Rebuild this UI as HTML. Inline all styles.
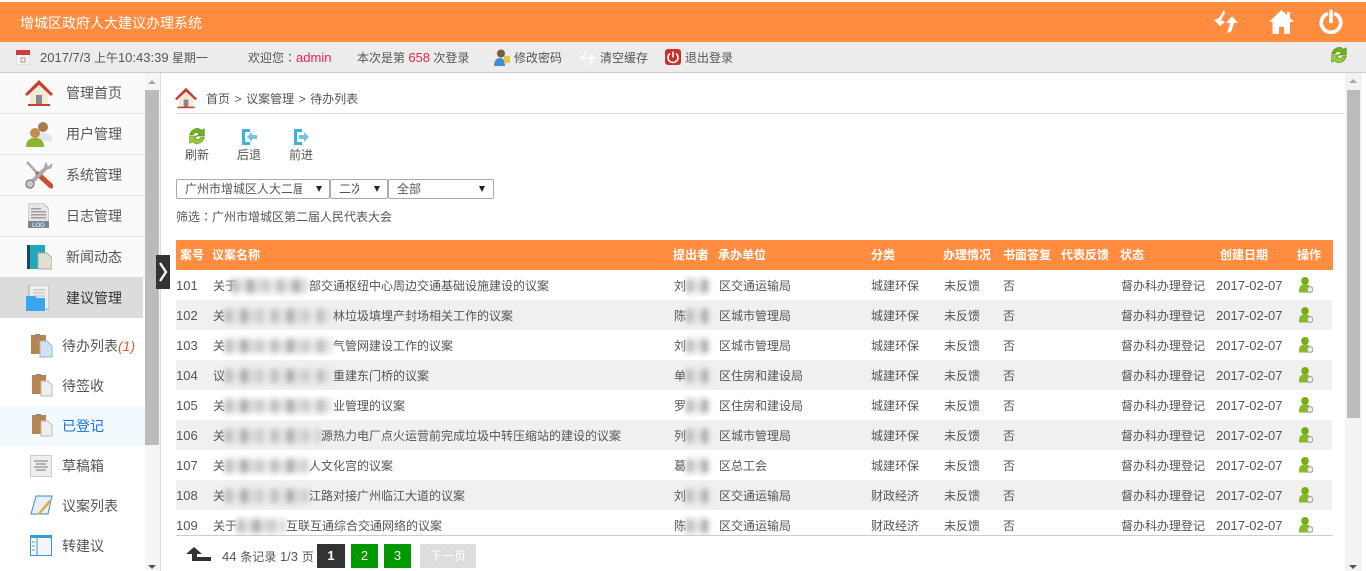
<!DOCTYPE html>
<html lang="zh">
<head>
<meta charset="utf-8">
<title>增城区政府人大建议办理系统</title>
<style>
*{box-sizing:border-box;margin:0;padding:0}
html,body{width:1366px;height:571px;overflow:hidden;background:#fff}
body{position:relative;font-family:"Liberation Sans","Noto Sans CJK SC",sans-serif;font-size:12px;color:#555}
.a{position:absolute;white-space:nowrap}
svg{position:absolute;display:block}
.top{left:0;top:2px;width:1366px;height:40px;background:#ff8c3f}
.bar{left:0;top:42px;width:1366px;height:31px;background:#ececec;border-bottom:1px solid #ccc}
.t{line-height:16px;height:16px}
.n{font-size:13px}
.red{color:#e8254f}
.col{font-family:"Noto Sans CJK TC",sans-serif}
.mi{left:0;width:145px;height:41px;background:#fafafa;border-bottom:1px solid #e2e2e2}
.mt{left:66px;font-size:14px;line-height:20px;color:#555}
.st{left:62px;font-size:14px;line-height:20px;color:#555}
.hd{left:176px;top:240px;width:1157px;height:30px;background:#ff8c3f}
.h{top:247px;line-height:16px;font-weight:bold;color:#fff;font-size:12px}
.clip{left:176px;top:270px;width:1157px;height:266px;overflow:hidden;border-bottom:1px solid #ccc;position:absolute}
.r{position:absolute;left:0;width:1156px;height:30px}
.r.g{background:#f0f0f0}
.r span{position:absolute;top:8px;line-height:16px;white-space:nowrap;color:#555}
.r i{position:absolute;top:9px;height:14px;filter:blur(3px);background:repeating-linear-gradient(90deg,#bbb 0 7px,#e2e2e2 7px 16px,#a4a4a4 16px 22px,#dadada 22px 33px,#c4c4c4 33px 38px,#e8e8e8 38px 46px)}
.c0{left:0;font-size:13px}.c1{left:37px}.c2{left:498px}.c3{left:543px}.c4{left:695px}.c5{left:768px}.c6{left:827px}.c7{left:945px}.c8{left:1040px;font-size:13px}
.r svg{left:1123px;top:7px}
.pb{top:544px;height:24px;line-height:24px;text-align:center;font-size:13px;color:#fff}
.sel{top:179px;height:20px;border:1px solid #aaa;background:#fff;border-radius:2px;line-height:18px;color:#555}
.sel b{position:absolute;left:8px;top:0;overflow:hidden;font-weight:normal;height:18px;white-space:nowrap}
.sel u{position:absolute;top:6px;width:0;height:0;border:3.500px solid transparent;border-bottom:0;border-top:6px solid #222}
</style>
</head>
<body>
<svg width="0" height="0" style="position:absolute">
<defs>
<symbol id="op" viewBox="0 0 14 16">
<ellipse cx="6" cy="4" rx="3.800" ry="4" fill="#76ac14"/>
<path d="M0 14c0-5 2-6.500 6-6.500s6 1.500 6 6.500v1.500H0z" fill="#86ba1e"/>
<circle cx="11" cy="12.500" r="2.900" fill="#eee" stroke="#999"/>
</symbol>
<symbol id="cl" viewBox="0 0 24 24">
<rect x="2" y="1" width="14" height="19" fill="#b9854f"/><rect x="6" y="0" width="5" height="3" fill="#8a8a8a"/>
<path d="M11 7h7l4 4v11H11z" fill="#eee" stroke="#bbb"/>
</symbol>
<symbol id="rf" viewBox="0 0 16 16">
<path d="M1.500 7C3 1.500 9-.5 12 3L14.500 1.500V8H8l2-2C8 4 5 5 4.500 7z" fill="#6fb01c" stroke="#4c7f10" stroke-width=".5"/>
<path d="M14.500 9c-1.500 5.500-7.500 7.500-10.500 4L1.500 14.500V8H8l-2 2c2 2 5 1 5.500-1z" fill="#96d030" stroke="#4c7f10" stroke-width=".5"/>
</symbol>
</defs>
</svg>

<div class="a top"></div>
<div class="a t" style="left:20px;top:14px;font-size:14px;color:#fff;line-height:18px;height:18px">增城区政府人大建议办理系统</div>
<svg style="left:1214px;top:9px" width="24" height="24" viewBox="0 0 24 24"><path d="M10 1 5 9 0 11l6 6 5-4-4-2 4-7zM18 7l6 7h-4l-3 9-4 1 3-10h-4z" fill="#fff"/></svg>
<svg style="left:1269px;top:10px" width="25" height="24" viewBox="0 0 25 24"><path d="M12.500 0 0 12h3.500v12h6.500v-7h5v7h6V12H25l-4-4V2h-3v3z" fill="#fff"/></svg>
<svg style="left:1319px;top:9px" width="24" height="25" viewBox="0 0 26 26"><path d="M8 5a10.500 10.500 0 1 0 10 0" fill="none" stroke="#fff" stroke-width="4" stroke-linecap="round"/><path d="M13 2v11" stroke="#fff" stroke-width="4" stroke-linecap="round"/></svg>

<div class="a bar"></div>
<svg style="left:16px;top:50px" width="14" height="15" viewBox="0 0 14 15"><rect width="14" height="15" fill="#f4f4f4" stroke="#ccc"/><rect width="14" height="5" fill="#d33a3a"/><path d="M5 8h4v4H5z" fill="none" stroke="#999"/></svg>
<div class="a t" style="left:40px;top:50px"><span class="n">2017/7/3</span> 上午<span class="n">10:43:39</span> 星期一</div>
<div class="a t" style="left:248px;top:50px">欢迎您<span class="col" lang="zh-TW">：</span><span class="n red">admin</span></div>
<div class="a t" style="left:357px;top:50px">本次是第 <span class="n red">658</span> 次登录</div>
<svg style="left:493px;top:49px" width="18" height="17" viewBox="0 0 18 17"><circle cx="8" cy="4.500" r="4" fill="#7a5c3e"/><path d="M1 17c0-6 3-8 6-8s5 2 5 8z" fill="#3f8fd8"/><path d="M11 7h6v7h-6z" fill="#e8c34a"/></svg>
<div class="a t" style="left:514px;top:50px">修改密码</div>
<svg style="left:579px;top:49px" width="17" height="17" viewBox="0 0 24 24"><path d="M10 1 5 9 0 11l6 6 5-4-4-2 4-7zM18 7l6 7h-4l-3 9-4 1 3-10h-4z" fill="#fafafa"/></svg>
<div class="a t" style="left:600px;top:50px">清空缓存</div>
<svg style="left:665px;top:49px" width="16" height="16" viewBox="0 0 16 16"><rect width="16" height="16" rx="3" fill="#c9302c"/><path d="M5 4.500a5 5 0 1 0 6 0" fill="none" stroke="#fff" stroke-width="1.600"/><path d="M8 2.500v6" stroke="#fff" stroke-width="1.600"/></svg>
<div class="a t" style="left:685px;top:50px">退出登录</div>
<svg style="left:1330px;top:46px" width="18" height="18"><use href="#rf"/></svg>

<!-- sidebar -->
<div class="a mi" style="top:73px"></div>
<div class="a mi" style="top:114px"></div>
<div class="a mi" style="top:155px"></div>
<div class="a mi" style="top:196px"></div>
<div class="a mi" style="top:237px"></div>
<div class="a" style="left:0;top:277px;width:143px;height:41px;background:#dcdcdc"></div>
<div class="a" style="left:0;top:406px;width:145px;height:40px;background:#f3faff"></div>

<svg style="left:25px;top:79px" width="28" height="28" viewBox="0 0 28 28"><path d="M14 1 0 15l2 2L14 6l12 11 2-2z" fill="#c8402f"/><path d="M5 15 14 7l9 8v11H5z" fill="#f2ead8"/><rect x="11" y="16" width="6" height="10" fill="#888"/><rect x="3" y="25" width="22" height="2" fill="#c8402f"/></svg>
<div class="a mt" style="top:83px">管理首页</div>
<svg style="left:26px;top:121px" width="27" height="26" viewBox="0 0 27 26"><circle cx="17" cy="6" r="5" fill="#a9794f"/><path d="M11 18c0-5 3-6 6-6s9 1 9 6-3 2-15 0z" fill="#dfe8ee"/><circle cx="9" cy="12" r="5" fill="#c48a50"/><path d="M0 26c0-7 4-9 9-9s9 2 9 9z" fill="#8db42f"/></svg>
<div class="a mt" style="top:124px">用户管理</div>
<svg style="left:25px;top:161px" width="28" height="28" viewBox="0 0 28 28"><path d="M2 1 13 13" stroke="#aaa" stroke-width="2.500"/><path d="M13 13 26 25" stroke="#c8502f" stroke-width="5" stroke-linecap="round"/><path d="M22 6 6 22" stroke="#aaa" stroke-width="4"/><circle cx="5" cy="23" r="4" fill="#ccc" stroke="#888" stroke-width="1.500"/><path d="M22 1a5 5 0 0 0-2 7l5 0a5 5 0 0 0 2-6l-3 3-2-1z" fill="#aaa"/></svg>
<div class="a mt" style="top:165px">系统管理</div>
<svg style="left:28px;top:203px" width="21" height="25" viewBox="0 0 21 25"><path d="M0 0h15l6 6v19H0z" fill="#e6e6e6" stroke="#bbb"/><path d="M3 5h10v1.500H3zM3 8h15v1.500H3zM3 11h15v1.500H3zM3 14h15v1.500H3z" fill="#a99"/><rect y="18" width="21" height="7" fill="#74889a"/><text x="10.500" y="24" font-size="6" fill="#fff" text-anchor="middle">LOG</text></svg>
<div class="a mt" style="top:206px">日志管理</div>
<svg style="left:27px;top:245px" width="25" height="25" viewBox="0 0 25 25"><rect width="18" height="24" rx="1" fill="#22a7bc"/><rect width="3" height="24" fill="#174a5a"/><path d="M11 8h9l5 5v11H11z" fill="#e2dfcf" stroke="#aaa"/></svg>
<div class="a mt" style="top:247px">新闻动态</div>
<svg style="left:26px;top:285px" width="23" height="26" viewBox="0 0 23 26"><rect x="3" y="0" width="20" height="24" fill="#eee" stroke="#aaa"/><path d="M7 5h12M7 8h12M7 11h12" stroke="#bbb"/><path d="M0 11h9l2 2h8v13H0z" fill="#39a6f2"/></svg>
<div class="a mt" style="top:288px;color:#333">建议管理</div>

<svg style="left:30px;top:334px" width="24" height="24" viewBox="0 0 24 24"><rect x="1" y="1" width="15" height="19" fill="#b9854f"/><rect x="5" y="0" width="5" height="3" fill="#8a8a8a"/><path d="M10 7h7l5 5v11H10z" fill="#cfe3f5" stroke="#9bb"/></svg>
<div class="a st" style="top:336px">待办列表<span style="color:#e8552f;font-style:italic">(1)</span></div>
<svg style="left:30px;top:374px" width="24" height="24"><use href="#cl"/></svg>
<div class="a st" style="top:376px">待签收</div>
<svg style="left:30px;top:414px" width="24" height="24"><use href="#cl"/></svg>
<div class="a st" style="top:416px;color:#1a6fe0">已登记</div>
<svg style="left:30px;top:455px" width="22" height="22" viewBox="0 0 22 22"><rect x=".5" y=".5" width="21" height="21" fill="#eee" stroke="#ccc"/><path d="M4 6h14M6 9h10M4 12h14M6 15h10" stroke="#777"/></svg>
<div class="a st" style="top:456px">草稿箱</div>
<svg style="left:30px;top:495px" width="23" height="23" viewBox="0 0 23 23"><path d="M6 1h16l-4 18H1z" fill="#e6eef7" stroke="#3a8fc9"/><path d="M19 5 9 17l-2 3 3-1L21 7z" fill="#e0a93a"/></svg>
<div class="a st" style="top:496px">议案列表</div>
<svg style="left:30px;top:535px" width="22" height="21" viewBox="0 0 22 21"><rect x=".5" y=".5" width="21" height="20" fill="#f2f6f9" stroke="#3a9ad0"/><rect width="22" height="3" fill="#3a9ad0"/><path d="M7 3v17" stroke="#3a9ad0"/><path d="M2 7h3M2 11h3M2 15h3" stroke="#5a9"/></svg>
<div class="a st" style="top:536px">转建议</div>

<!-- sidebar scrollbar -->
<div class="a" style="left:145px;top:73px;width:15px;height:498px;background:#f5f5f5"></div>
<div class="a" style="left:145px;top:90px;width:14px;height:355px;background:#bbb"></div>
<div class="a" style="left:148px;top:80px;border:4px solid transparent;border-top:0;border-bottom:4px solid #aaa"></div>
<div class="a" style="left:148px;top:565px;border:4px solid transparent;border-bottom:0;border-top:4px solid #555"></div>
<div class="a" style="left:160px;top:73px;width:1px;height:498px;background:#ddd"></div>
<div class="a" style="left:156px;top:255px;width:14px;height:34px;background:#333"></div>
<svg style="left:158px;top:261px" width="10" height="22" viewBox="0 0 10 22"><path d="M2 2l6 9-6 9" fill="none" stroke="#fff" stroke-width="2.400"/></svg>

<!-- breadcrumb -->
<svg style="left:175px;top:87px" width="22" height="22" viewBox="0 0 28 28"><path d="M14 1 0 15l2 2L14 6l12 11 2-2z" fill="#c8402f"/><path d="M5 15 14 7l9 8v11H5z" fill="#f2ead8"/><rect x="11" y="16" width="6" height="10" fill="#888"/><rect x="3" y="25" width="22" height="2" fill="#c8402f"/></svg>
<div class="a t" style="left:206px;top:91px;word-spacing:1.200px">首页 &gt; 议案管理 &gt; 待办列表</div>
<div class="a" style="left:176px;top:113px;width:1169px;height:1px;background:#ddd"></div>

<svg style="left:188px;top:127px" width="18" height="18"><use href="#rf"/></svg>
<div class="a t" style="left:185px;top:147px">刷新</div>
<svg style="left:241px;top:129px" width="17" height="16" viewBox="0 0 17 16"><path d="M1 0h8v3H4v10h5v3H1z" fill="#3ab4d8"/><path d="M16 6h-5V3L6 8l5 5v-3h5z" fill="#6cc8e2"/></svg>
<div class="a t" style="left:237px;top:147px">后退</div>
<svg style="left:293px;top:129px" width="17" height="16" viewBox="0 0 17 16"><path d="M1 0h8v3H4v10h5v3H1z" fill="#3ab4d8"/><path d="M6 6h5V3l5 5-5 5v-3H6z" fill="#6cc8e2"/></svg>
<div class="a t" style="left:289px;top:147px">前进</div>

<!-- filters -->
<div class="a sel" style="left:176px;width:154px"><b style="width:117px">广州市增城区人大二届</b><u style="left:139px"></u></div>
<div class="a sel" style="left:330px;width:58px"><b style="width:20px">二次</b><u style="left:43px"></u></div>
<div class="a sel" style="left:388px;width:106px"><b>全部</b><u style="left:90px"></u></div>
<div class="a t" style="left:176px;top:209px">筛选<span class="col" lang="zh-TW">：</span>广州市增城区第二届人民代表大会</div>

<!-- table header -->
<div class="a hd"></div>
<div class="a h" style="left:180px">案号</div>
<div class="a h" style="left:212px">议案名称</div>
<div class="a h" style="left:673px">提出者</div>
<div class="a h" style="left:718px">承办单位</div>
<div class="a h" style="left:871px">分类</div>
<div class="a h" style="left:943px">办理情况</div>
<div class="a h" style="left:1003px">书面答复</div>
<div class="a h" style="left:1061px">代表反馈</div>
<div class="a h" style="left:1120px">状态</div>
<div class="a h" style="left:1220px">创建日期</div>
<div class="a h" style="left:1297px">操作</div>

<div class="clip">
<div class="r" style="top:0"><span class="c0">101</span><span class="c1">关于</span><i style="left:55px;width:77px"></i><span style="left:133px">部交通枢纽中心周边交通基础设施建设的议案</span><span class="c2">刘</span><i style="left:510px;width:22px"></i><span class="c3">区交通运输局</span><span class="c4">城建环保</span><span class="c5">未反馈</span><span class="c6">否</span><span class="c7">督办科办理登记</span><span class="c8">2017-02-07</span><svg width="14" height="16"><use href="#op"/></svg></div>
<div class="r g" style="top:30px"><span class="c0">102</span><span class="c1">关</span><i style="left:49px;width:107px"></i><span style="left:157px">林垃圾填埋产封场相关工作的议案</span><span class="c2">陈</span><i style="left:510px;width:22px"></i><span class="c3">区城市管理局</span><span class="c4">城建环保</span><span class="c5">未反馈</span><span class="c6">否</span><span class="c7">督办科办理登记</span><span class="c8">2017-02-07</span><svg width="14" height="16"><use href="#op"/></svg></div>
<div class="r" style="top:60px"><span class="c0">103</span><span class="c1">关</span><i style="left:49px;width:107px"></i><span style="left:157px">气管网建设工作的议案</span><span class="c2">刘</span><i style="left:510px;width:22px"></i><span class="c3">区城市管理局</span><span class="c4">城建环保</span><span class="c5">未反馈</span><span class="c6">否</span><span class="c7">督办科办理登记</span><span class="c8">2017-02-07</span><svg width="14" height="16"><use href="#op"/></svg></div>
<div class="r g" style="top:90px"><span class="c0">104</span><span class="c1">议</span><i style="left:49px;width:107px"></i><span style="left:157px">重建东门桥的议案</span><span class="c2">单</span><i style="left:510px;width:22px"></i><span class="c3">区住房和建设局</span><span class="c4">城建环保</span><span class="c5">未反馈</span><span class="c6">否</span><span class="c7">督办科办理登记</span><span class="c8">2017-02-07</span><svg width="14" height="16"><use href="#op"/></svg></div>
<div class="r" style="top:120px"><span class="c0">105</span><span class="c1">关</span><i style="left:49px;width:107px"></i><span style="left:157px">业管理的议案</span><span class="c2">罗</span><i style="left:510px;width:22px"></i><span class="c3">区住房和建设局</span><span class="c4">城建环保</span><span class="c5">未反馈</span><span class="c6">否</span><span class="c7">督办科办理登记</span><span class="c8">2017-02-07</span><svg width="14" height="16"><use href="#op"/></svg></div>
<div class="r g" style="top:150px"><span class="c0">106</span><span class="c1">关</span><i style="left:49px;width:95px"></i><span style="left:145px">源热力电厂点火运营前完成垃圾中转压缩站的建设的议案</span><span class="c2">列</span><i style="left:510px;width:22px"></i><span class="c3">区城市管理局</span><span class="c4">城建环保</span><span class="c5">未反馈</span><span class="c6">否</span><span class="c7">督办科办理登记</span><span class="c8">2017-02-07</span><svg width="14" height="16"><use href="#op"/></svg></div>
<div class="r" style="top:180px"><span class="c0">107</span><span class="c1">关</span><i style="left:49px;width:83px"></i><span style="left:133px">人文化宫的议案</span><span class="c2">葛</span><i style="left:510px;width:22px"></i><span class="c3">区总工会</span><span class="c4">城建环保</span><span class="c5">未反馈</span><span class="c6">否</span><span class="c7">督办科办理登记</span><span class="c8">2017-02-07</span><svg width="14" height="16"><use href="#op"/></svg></div>
<div class="r g" style="top:210px"><span class="c0">108</span><span class="c1">关</span><i style="left:49px;width:83px"></i><span style="left:133px">江路对接广州临江大道的议案</span><span class="c2">刘</span><i style="left:510px;width:22px"></i><span class="c3">区交通运输局</span><span class="c4">财政经济</span><span class="c5">未反馈</span><span class="c6">否</span><span class="c7">督办科办理登记</span><span class="c8">2017-02-07</span><svg width="14" height="16"><use href="#op"/></svg></div>
<div class="r" style="top:240px"><span class="c0">109</span><span class="c1">关于</span><i style="left:61px;width:48px"></i><span style="left:110px">互联互通综合交通网络的议案</span><span class="c2">陈</span><i style="left:510px;width:22px"></i><span class="c3">区交通运输局</span><span class="c4">财政经济</span><span class="c5">未反馈</span><span class="c6">否</span><span class="c7">督办科办理登记</span><span class="c8">2017-02-07</span><svg width="14" height="16"><use href="#op"/></svg></div>
</div>

<!-- pager -->
<svg style="left:186px;top:547px" width="26" height="16" viewBox="0 0 26 16"><path d="M0 7 8 0l8 7h-5v3h14v4H6V7z" fill="#333"/></svg>
<div class="a t" style="left:222px;top:549px;word-spacing:.4px"><span class="n">44</span> 条记录 <span class="n">1/3</span> 页</div>
<div class="a pb" style="left:317px;width:28px;background:#333;font-weight:bold">1</div>
<div class="a pb" style="left:351px;width:27px;background:#090">2</div>
<div class="a pb" style="left:384px;width:27px;background:#090">3</div>
<div class="a pb" style="left:420px;width:56px;background:#ddd;font-size:12px">下一页</div>

<!-- main scrollbar -->
<div class="a" style="left:1345px;top:73px;width:17px;height:498px;background:#f3f3f3"></div>
<div class="a" style="left:1347px;top:90px;width:13px;height:328px;background:#bbb"></div>
<div class="a" style="left:1349px;top:79px;border:4px solid transparent;border-top:0;border-bottom:4px solid #aaa"></div>
<div class="a" style="left:1349px;top:565px;border:4px solid transparent;border-bottom:0;border-top:4px solid #555"></div>
</body>
</html>
